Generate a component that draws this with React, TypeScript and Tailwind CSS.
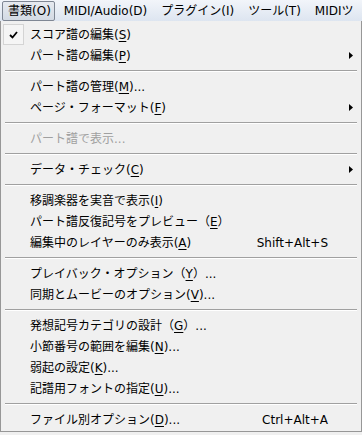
import React from "react";

type Entry =
  | { sep: true }
  | {
      sep?: false;
      pre: string;
      key?: string;
      post?: string;
      shortcut?: string;
      sub?: boolean;
      checked?: boolean;
      disabled?: boolean;
    };

const entries: Entry[] = [
  { pre: "スコア譜の編集(", key: "S", post: ")", checked: true },
  { pre: "パート譜の編集(", key: "P", post: ")", sub: true },
  { sep: true },
  { pre: "パート譜の管理(", key: "M", post: ")..." },
  { pre: "ページ・フォーマット(", key: "F", post: ")", sub: true },
  { sep: true },
  { pre: "パート譜で表示...", disabled: true },
  { sep: true },
  { pre: "データ・チェック(", key: "C", post: ")", sub: true },
  { sep: true },
  { pre: "移調楽器を実音で表示(", key: "I", post: ")" },
  { pre: "パート譜反復記号をプレビュー（", key: "E", post: "）" },
  { pre: "編集中のレイヤーのみ表示(", key: "A", post: ")", shortcut: "Shift+Alt+S" },
  { sep: true },
  { pre: "プレイバック・オプション（", key: "Y", post: "）..." },
  { pre: "同期とムービーのオプション(", key: "V", post: ")..." },
  { sep: true },
  { pre: "発想記号カテゴリの設計（", key: "G", post: "）..." },
  { pre: "小節番号の範囲を編集(", key: "N", post: ")..." },
  { pre: "弱起の設定(", key: "K", post: ")..." },
  { pre: "記譜用フォントの指定(", key: "U", post: ")..." },
  { sep: true },
  { pre: "ファイル別オプション(", key: "D", post: ")...", shortcut: "Ctrl+Alt+A" },
];

const menus = ["MIDI/Audio(D)", "プラグイン(I)", "ツール(T)", "MIDIツ"];

export default function App() {
  return (
    <div
      className="w-[362px] h-[435px] overflow-hidden bg-[#f0f0f0] text-[12px] text-black"
      style={{ fontFamily: '"DejaVu Sans", "Noto Sans CJK JP", sans-serif' }}
    >
      {/* menu bar */}
      <div className="flex h-[21px] items-center gap-[14px] overflow-hidden whitespace-nowrap bg-gradient-to-b from-[#f2f5fa] to-[#dde5f0] pl-[2px] leading-none">
        <div className="-mr-[5px] flex h-[20px] items-center rounded-[2px] border border-[#7f8794] bg-gradient-to-b from-[#e6eaf0] to-[#d3dae4] pl-[5px] pr-[3px]">
          書類(O)
        </div>
        {menus.map((m) => (
          <span key={m} className="shrink-0">
            {m}
          </span>
        ))}
      </div>

      {/* dropdown */}
      <div className="flex h-[411px] w-[362px] flex-col border border-t-0 border-[#979797] bg-[#f0f0f0] pt-[3px]">
        {entries.map((e, i) =>
          e.sep ? (
            <div key={i} className="flex h-[10px] items-center pl-[4px] pr-[4px]">
              <div className="h-[2px] w-full border-t border-b border-t-[#a0a0a0] border-b-white" />
            </div>
          ) : (
            <div
              key={i}
              className={`relative flex h-[21px] items-center pl-[29px] pr-[33px] leading-none ${
                e.disabled ? "text-[#a0a0a0]" : "text-black"
              }`}
            >
              {e.checked && (
                <div className="absolute left-[2px] top-0 flex h-[21px] w-[21px] items-center justify-center border border-[#d4d4d4] bg-[#f5f5f5]">
                  <svg width="9" height="8" viewBox="0 0 9 8">
                    <path d="M1 4 L3.5 6.5 L8 1" stroke="#000" strokeWidth="1.8" fill="none" />
                  </svg>
                </div>
              )}
              <span className="whitespace-nowrap">
                {e.pre}
                {e.key && <span className="underline underline-offset-[2px]">{e.key}</span>}
                {e.post}
              </span>
              {e.shortcut && <span className="ml-auto whitespace-nowrap">{e.shortcut}</span>}
              {e.sub && (
                <svg className="absolute left-[348px] top-[7px]" width="4" height="7" viewBox="0 0 4 7">
                  <path d="M0 0 L4 3.5 L0 7 Z" fill="#000" />
                </svg>
              )}
            </div>
          )
        )}
      </div>
    </div>
  );
}
